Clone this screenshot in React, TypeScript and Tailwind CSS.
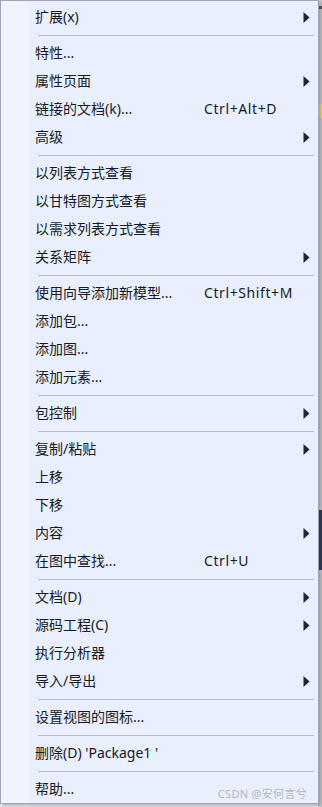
import React from "react";

// Menu entry types
type Entry =
  | { kind: "item"; label: string; shortcut?: string; sub?: boolean }
  | { kind: "sep" };

const item = (label: string, opts: { shortcut?: string; sub?: boolean } = {}): Entry => ({
  kind: "item",
  label,
  ...opts,
});
const sep: Entry = { kind: "sep" };

const entries: Entry[] = [
  item("扩展(x)", { sub: true }),
  sep,
  item("特性..."),
  item("属性页面", { sub: true }),
  item("链接的文档(k)...", { shortcut: "Ctrl+Alt+D" }),
  item("高级", { sub: true }),
  sep,
  item("以列表方式查看"),
  item("以甘特图方式查看"),
  item("以需求列表方式查看"),
  item("关系矩阵", { sub: true }),
  sep,
  item("使用向导添加新模型...", { shortcut: "Ctrl+Shift+M" }),
  item("添加包..."),
  item("添加图..."),
  item("添加元素..."),
  sep,
  item("包控制", { sub: true }),
  sep,
  item("复制/粘贴", { sub: true }),
  item("上移"),
  item("下移"),
  item("内容", { sub: true }),
  item("在图中查找...", { shortcut: "Ctrl+U" }),
  sep,
  item("文档(D)", { sub: true }),
  item("源码工程(C)", { sub: true }),
  item("执行分析器"),
  item("导入/导出", { sub: true }),
  sep,
  item("设置视图的图标..."),
  sep,
  item("删除(D) 'Package1 '"),
  sep,
  item("帮助..."),
];

function Arrow() {
  return (
    <svg width="7" height="11" viewBox="0 0 7 11" className="block">
      <path d="M0.5 0 L6.5 5.5 L0.5 11 Z" fill="#1b2638" />
    </svg>
  );
}

export default function App() {
  return (
    <div
      className="relative w-[322px] h-[807px] overflow-hidden bg-[#eef0f4]"
      style={{ fontFamily: '"Noto Sans", "Noto Sans CJK SC", sans-serif' }}
    >
      {/* bits of the window behind the menu */}
      <div className="absolute right-0 top-0 w-[4px] h-full bg-[#c9ccd3]">
        <div className="mt-[6px] h-[3px] bg-[#5c6270]" />
        <div className="mt-[95px] h-[14px] bg-[#e8dba0]" />
        <div className="mt-[392px] h-[60px] bg-[#34405a]" />
      </div>

      <div className="relative w-[319px] h-[804px] bg-[#e9effc] border border-[#9ea7b8] shadow-[2px_2px_3px_rgba(0,0,0,0.25)] flex">
        {/* icon gutter */}
        <div className="w-[28px] shrink-0 bg-[#f0f4fd]" />
        <div className="flex-1 flex flex-col pt-[2px]">
          {entries.map((e, i) =>
            e.kind === "sep" ? (
              <div key={i} className="h-[8px] flex items-center pl-[9px] pr-[4px]">
                <div className="h-px w-full bg-[#b9bdc7]" />
              </div>
            ) : (
              <div
                key={i}
                className="h-[28px] flex items-center pl-[6px] pr-[8px] text-[14px] leading-none text-[#161a24]"
              >
                <span className="w-[169px] shrink-0 whitespace-pre">{e.label}</span>
                <span className="flex-1 whitespace-pre tracking-[0.6px]">{e.shortcut ?? ""}</span>
                {e.sub && <Arrow />}
              </div>
            )
          )}
        </div>
        <span className="absolute right-[11px] bottom-[4px] text-[11px] leading-none tracking-[0.3px] text-[#b3b8c4]">
          CSDN @安何言兮
        </span>
      </div>
    </div>
  );
}
